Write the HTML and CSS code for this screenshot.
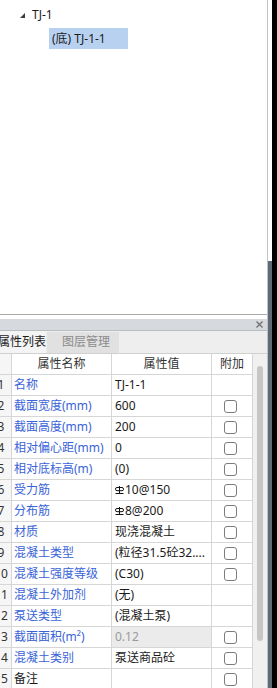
FILE: index.html
```html
<!DOCTYPE html>
<html lang="zh-CN">
<head>
    <meta charset="UTF-8">
    <meta name="viewport" content="width=device-width, initial-scale=1.0">
    <title>属性列表</title>
    <link rel="stylesheet" href="styles.css">
</head>
<body>
    <div class="frame">
        <div class="workspace">
            <!-- 构件树 -->
            <div class="tree-panel">
                <ul class="tree">
                    <li>
                        <div class="node-row root">
                            <span class="toggle"></span>
                            <span class="node-label">TJ-1</span>
                        </div>
                        <ul class="children">
                            <li>
                                <div class="node-row">
                                    <span class="node-label selected">(底) TJ-1-1</span>
                                </div>
                            </li>
                        </ul>
                    </li>
                </ul>
            </div>

            <div class="splitter"></div>

            <!-- 属性面板 -->
            <div class="prop-panel">
                <div class="title-bar">
                    <svg class="close" width="7" height="7" viewBox="0 0 7 7">
                        <path d="M0.5 0.5L6.5 6.5M6.5 0.5L0.5 6.5" stroke="#707070" stroke-width="1.3" fill="none"/>
                    </svg>
                </div>

                <div class="tab-strip">
                    <div class="tab active">属性列表</div>
                    <div class="tab">图层管理</div>
                </div>

                <div class="grid-area">
                    <div class="grid-clip">
                        <div class="prop-grid">
                            <div class="cell num head"></div>
                            <div class="cell head">属性名称</div>
                            <div class="cell head">属性值</div>
                            <div class="cell head">附加</div>

                            <div class="cell num">1</div>
                            <div class="cell name">名称</div>
                            <div class="cell value">TJ-1-1</div>
                            <div class="cell extra"></div>

                            <div class="cell num">2</div>
                            <div class="cell name">截面宽度(mm)</div>
                            <div class="cell value">600</div>
                            <div class="cell extra"><span class="check"></span></div>

                            <div class="cell num">3</div>
                            <div class="cell name">截面高度(mm)</div>
                            <div class="cell value">200</div>
                            <div class="cell extra"><span class="check"></span></div>

                            <div class="cell num">4</div>
                            <div class="cell name">相对偏心距(mm)</div>
                            <div class="cell value">0</div>
                            <div class="cell extra"><span class="check"></span></div>

                            <div class="cell num">5</div>
                            <div class="cell name">相对底标高(m)</div>
                            <div class="cell value">(0)</div>
                            <div class="cell extra"><span class="check"></span></div>

                            <div class="cell num">6</div>
                            <div class="cell name">受力筋</div>
                            <div class="cell value"><svg class="grade" width="9" height="8" viewBox="0 0 9 8"><path d="M4.5 0V7.5M0.5 7.5H8.5" stroke="#111" stroke-width="1" fill="none"/><rect x="0.5" y="1.5" width="8" height="3.2" rx="1.5" stroke="#111" stroke-width="1" fill="none"/></svg>10@150</div>
                            <div class="cell extra"><span class="check"></span></div>

                            <div class="cell num">7</div>
                            <div class="cell name">分布筋</div>
                            <div class="cell value"><svg class="grade" width="9" height="8" viewBox="0 0 9 8"><path d="M4.5 0V7.5M0.5 7.5H8.5" stroke="#111" stroke-width="1" fill="none"/><rect x="0.5" y="1.5" width="8" height="3.2" rx="1.5" stroke="#111" stroke-width="1" fill="none"/></svg>8@200</div>
                            <div class="cell extra"><span class="check"></span></div>

                            <div class="cell num">8</div>
                            <div class="cell name">材质</div>
                            <div class="cell value">现浇混凝土</div>
                            <div class="cell extra"><span class="check"></span></div>

                            <div class="cell num">9</div>
                            <div class="cell name">混凝土类型</div>
                            <div class="cell value">(粒径31.5砼32....</div>
                            <div class="cell extra"><span class="check"></span></div>

                            <div class="cell num">10</div>
                            <div class="cell name">混凝土强度等级</div>
                            <div class="cell value">(C30)</div>
                            <div class="cell extra"><span class="check"></span></div>

                            <div class="cell num">11</div>
                            <div class="cell name">混凝土外加剂</div>
                            <div class="cell value">(无)</div>
                            <div class="cell extra"></div>

                            <div class="cell num">12</div>
                            <div class="cell name">泵送类型</div>
                            <div class="cell value">(混凝土泵)</div>
                            <div class="cell extra"></div>

                            <div class="cell num">13</div>
                            <div class="cell name">截面面积(m²)</div>
                            <div class="cell value readonly">0.12</div>
                            <div class="cell extra"><span class="check"></span></div>

                            <div class="cell num">14</div>
                            <div class="cell name">混凝土类别</div>
                            <div class="cell value">泵送商品砼</div>
                            <div class="cell extra"><span class="check"></span></div>

                            <div class="cell num">15</div>
                            <div class="cell name plain">备注</div>
                            <div class="cell value"></div>
                            <div class="cell extra"><span class="check"></span></div>
                        </div>
                    </div>
                    <div class="vscroll"><div class="thumb"></div></div>
                </div>
            </div>
        </div>
        <div class="side-strip"></div>
    </div>
</body>
</html>
```

FILE: styles.css
```css
* {
    margin: 0;
    padding: 0;
    box-sizing: border-box;
}

body {
    font-family: "Noto Sans", "Noto Sans CJK SC", sans-serif;
    font-size: 12px;
    color: #1a1a1a;
    background: #000;
    height: 688px;
    overflow: hidden;
}

.frame {
    display: flex;
    height: 688px;
}

.workspace {
    width: 268px;
    height: 688px;
    display: flex;
    flex-direction: column;
    background: #fff;
    border-right: 1px solid #c2c2c2;
}

.side-strip {
    width: 4px;
    height: 688px;
    background: linear-gradient(#fff 0, #fff 261px, #5e6a76 261px);
}

/* 构件树 */
.tree-panel {
    height: 315px;
    border-bottom: 1px solid #a9a9a9;
    padding-top: 4px;
}

.tree {
    list-style: none;
}

.tree ul {
    list-style: none;
}

.node-row {
    display: flex;
    align-items: center;
    height: 21px;
    line-height: 21px;
}

.node-row.root {
    margin-bottom: 3px;
}

.toggle {
    width: 0;
    height: 0;
    margin-left: 20px;
    margin-right: 7px;
    margin-top: 1px;
    border-left: 5px solid transparent;
    border-bottom: 5px solid #3c3c3c;
}

.children .node-row {
    padding-left: 49px;
}

.node-label.selected {
    display: block;
    width: 79px;
    padding-left: 3px;
    background: #b9d1f1;
    white-space: nowrap;
}

.splitter {
    height: 4px;
}

/* 属性面板 */
.prop-panel {
    flex: 1;
    display: flex;
    flex-direction: column;
    min-height: 0;
}

.title-bar {
    height: 12px;
    background: #d6d9dd;
    border-bottom: 1px solid #b9bcc1;
    display: flex;
    align-items: center;
    justify-content: flex-end;
    padding-right: 4px;
}

.tab-strip {
    height: 23px;
    background: #eeeeee;
    border-bottom: 1px solid #d0d0d0;
    display: flex;
    margin-left: -9px;
    overflow: hidden;
}

.tab {
    height: 22px;
    line-height: 22px;
    white-space: nowrap;
}

.tab.active {
    width: 55px;
    padding-left: 7px;
    background: #f4f4f4;
    color: #1a1a1a;
}

.tab:not(.active) {
    width: 72px;
    margin-left: 1px;
    margin-top: 1px;
    height: 21px;
    line-height: 20px;
    padding-left: 15px;
    background: #e1e1e1;
    color: #8b8b8b;
}

.grid-area {
    flex: 1;
    display: flex;
    min-height: 0;
}

.grid-clip {
    width: 253px;
    overflow: hidden;
}

.prop-grid {
    display: grid;
    grid-template-columns: 21px 100px 100px 41px;
    grid-auto-rows: 21px;
    margin-left: -9px;
    width: 262px;
}

.cell {
    border-right: 1px solid #d6d6d6;
    border-bottom: 1px solid #d6d6d6;
    line-height: 20px;
    white-space: nowrap;
    overflow: hidden;
    background: #fff;
}

.cell.head {
    text-align: center;
    color: #333;
}

.cell.num {
    text-align: center;
    color: #333;
    background: #f6f6f6;
}

.cell.name {
    padding-left: 2px;
    color: #3a63d8;
}

.cell.name.plain {
    color: #1a1a1a;
}

.cell.value {
    padding-left: 3px;
    color: #1a1a1a;
}

.cell.value.readonly {
    background: #ebebeb;
    color: #9a9a9a;
}

.grade {
    vertical-align: 0;
    margin-right: 1px;
}

.cell.extra {
    display: flex;
    align-items: center;
    padding-left: 12px;
}

.check {
    width: 13px;
    height: 13px;
    border: 1px solid #7c7c7c;
    border-radius: 3px;
    background: #fff;
}

.vscroll {
    width: 14px;
    background: #f0f0f0;
    padding-top: 12px;
    padding-left: 4px;
}

.thumb {
    width: 6px;
    height: 275px;
    border-radius: 3px;
    background: #c6c6c6;
}
```
